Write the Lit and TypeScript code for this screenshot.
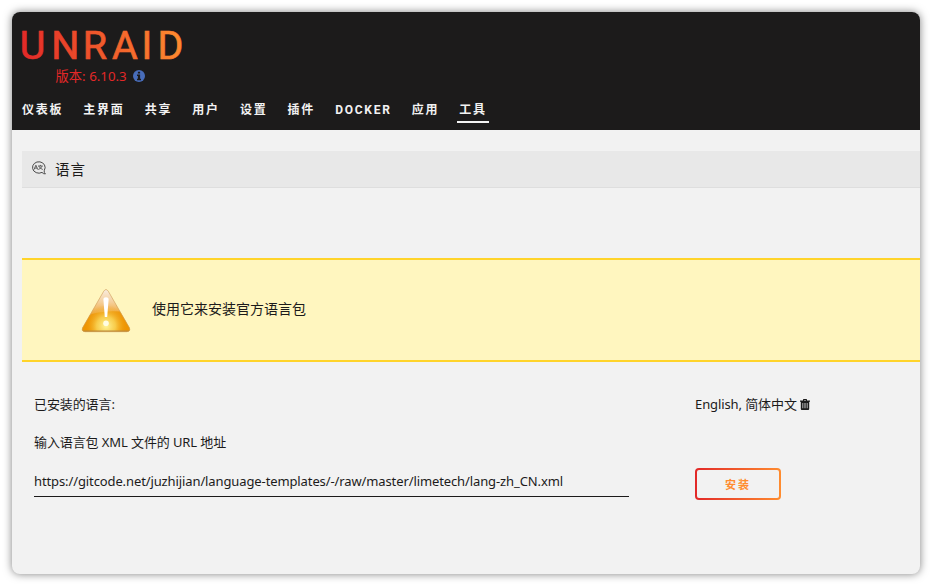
import { html, css, LitElement } from 'lit';
import { customElement, property } from 'lit/decorators.js';

const infoIcon = html`
    <svg class="icon" width="12" height="12" viewBox="0 0 12 12">
        <circle cx="6" cy="6" r="6" fill="#486dba"></circle>
        <path d="M4.9 1.7h2.2v1.8H4.9zM4 4.5h3.1v4.3H8v1.4H4V8.8h.9V5.9H4z" fill="#1c1b1b"></path>
    </svg>`;

const languageIcon = html`
    <svg width="16" height="14" viewBox="0 0 16 14" fill="none" stroke="#4a4a4a">
        <path d="M11 11.4A6.3 5.7 0 1 1 13.3 9.3Q12.6 11.6 14.4 12.9Q12.2 13 11 11.4" stroke-width="1"></path>
        <path d="M3 8.6L4.9 4.2L6.8 8.6M3.6 7.1h2.6M7 5h4.8M9.4 3.9V5M7.9 5.2Q9 7.7 11.8 8.5M11 5.2Q10 7.7 7.3 8.5" stroke-width=".85"></path>
    </svg>`;

const trashIcon = html`
    <svg class="icon" width="10" height="11" viewBox="0 0 10 11" fill="#1c1b1b">
        <path fill-rule="evenodd" d="M3 1.5V.7Q3 0 3.7 0h2.6Q7 0 7 .7v.8h3v1.2H9.2V10q0 1-1 1H1.8q-1 0-1-1V2.7H0V1.5zM4 .9v.6h2V.9zM2.5 4v5.2h.7V4zM4.6 4v5.2h.8V4zM6.8 4v5.2h.7V4z"></path>
    </svg>`;

const warningIcon = html`
    <svg width="50" height="46" viewBox="0 0 50 46">
        <defs>
            <linearGradient id="body" x1="0" y1="0" x2="0" y2="1">
                <stop offset="0" stop-color="#f8ece0"></stop>
                <stop offset=".3" stop-color="#f5cf9a"></stop>
                <stop offset=".58" stop-color="#f0a83a"></stop>
                <stop offset=".7" stop-color="#ef9c12"></stop>
                <stop offset="1" stop-color="#ee9809"></stop>
            </linearGradient>
            <radialGradient id="glow" gradientUnits="userSpaceOnUse" cx="25" cy="38" r="21">
                <stop offset="0" stop-color="#fff59a"></stop>
                <stop offset=".45" stop-color="#fad95c" stop-opacity=".8"></stop>
                <stop offset="1" stop-color="#ef9b0a" stop-opacity="0"></stop>
            </radialGradient>
            <clipPath id="shape">
                <path d="M22.8 3.1Q25 0 27.2 3.1L48.3 39.6Q50 43.5 45.8 43.7H4.2Q0 43.5 1.7 39.6Z"></path>
            </clipPath>
        </defs>
        <path d="M22.8 3.1Q25 0 27.2 3.1L48.3 39.6Q50 43.5 45.8 43.7H4.2Q0 43.5 1.7 39.6Z" fill="url(#body)"></path>
        <g clip-path="url(#shape)">
            <path d="M0 30Q22 20 50 25V46H0Z" fill="#ee9400" opacity=".8"></path>
            <rect y="18" width="50" height="28" fill="url(#glow)"></rect>
            <path d="M1 43.3H49" stroke="#b58b43" stroke-width="1.6"></path>
        </g>
        <path d="M22.8 3.1Q25 0 27.2 3.1L48.3 39.6Q50 43.5 45.8 43.7H4.2Q0 43.5 1.7 39.6Z" fill="none" stroke="#cf9f58" stroke-width=".8" opacity=".8"></path>
        <path d="M22.4 11.5Q22.4 9.2 25 9.2Q27.6 9.2 27.6 11.5L26.2 29H23.8Z" fill="#fff"></path>
        <circle cx="25" cy="35.3" r="2.8" fill="#fffde2"></circle>
    </svg>`;

@customElement('unraid-header')
export class UnraidHeader extends LitElement {

    @property()
    version: string = '';

    @property()
    active: string = '工具';

    items: string[] = ['仪表板', '主界面', '共享', '用户', '设置', '插件', 'DOCKER', '应用', '工具'];

    static styles = css`
    :host {
        display: block;
        box-sizing: border-box;
        height: 118px;
        padding: 8px 8px 0;
        background-color: #1c1b1b;
    }

    svg {
        display: block;
    }

    .logo {
        overflow: visible;
        font-family: Roboto, sans-serif;
        font-size: 39.4px;
        font-weight: 400;
    }

    .version {
        display: flex;
        align-items: center;
        gap: 6px;
        height: 20px;
        margin-top: -5px;
        padding-left: 35.5px;
        color: #e22828;
        font-size: 13.3px;
    }

    .icon {
        margin-top: 2px;
    }

    .menu {
        display: flex;
        gap: 16.1px;
        margin-top: 12px;
    }

    .item {
        box-sizing: border-box;
        height: 26px;
        padding: 0 2px;
        border-bottom: 2px solid transparent;
        color: #f2f2f2;
        font-family: Roboto, "Noto Sans CJK SC", sans-serif;
        font-size: 12px;
        font-weight: 700;
        line-height: 26px;
        letter-spacing: 1.75px;
        white-space: nowrap;
    }

    .active {
        border-bottom-color: #f2f2f2;
    }
  `;

    render() {
        return html`
            <svg class="logo" width="170" height="50" viewBox="0 0 170 50">
                <defs>
                    <linearGradient id="brand" gradientUnits="userSpaceOnUse" x1="2" y1="39" x2="162" y2="11">
                        <stop offset="0" stop-color="#e22828"></stop>
                        <stop offset="1" stop-color="#ff8c2f"></stop>
                    </linearGradient>
                </defs>
                <text x="-.3 31.2 62.8 92 121.6 137.6" y="39" fill="url(#brand)" stroke="url(#brand)" stroke-width=".7">UNRAID</text>
            </svg>
            <div class="version"><span>版本: ${this.version}</span>${infoIcon}</div>
            <nav class="menu">
                ${this.items.map(item => html`<a class="item ${item === this.active ? 'active' : ''}">${item}</a>`)}
            </nav>
        `;
    }
}

@customElement('language-form')
export class LanguageForm extends LitElement {

    @property()
    url: string = 'https://gitcode.net/juzhijian/language-templates/-/raw/master/limetech/lang-zh_CN.xml';

    static styles = css`
    :host {
        display: block;
        padding: 22px 0 0 12px;
        letter-spacing: -.1px;
    }

    .row {
        display: grid;
        grid-template-columns: 595px 1fr;
        column-gap: 66px;
        align-items: center;
        height: 38px;
    }

    .current {
        display: flex;
        align-items: center;
        gap: 3px;
    }

    .icon {
        margin-top: 2px;
    }

    .entry {
        align-items: start;
        height: 46px;
        padding-top: 8px;
    }

    .url {
        box-sizing: border-box;
        height: 29px;
        border: none;
        border-bottom: 1px solid #1c1b1b;
        border-radius: 0;
        outline: none;
        padding: 0 0 3px;
        background: transparent;
        color: #1c1b1b;
        font: inherit;
        letter-spacing: -.11px;
    }

    .install {
        box-sizing: border-box;
        width: 86px;
        height: 32px;
        border: 2px solid transparent;
        border-radius: 4px;
        padding: 0;
        background: linear-gradient(#f2f2f2, #f2f2f2) padding-box, linear-gradient(90deg, #e22828, #ff8c2f) border-box;
        color: #ff8c2f;
        font: inherit;
        font-size: 11px;
        font-weight: 700;
        letter-spacing: 2px;
    }
  `;

    render() {
        return html`
            <div class="row">
                <span>已安装的语言:</span>
                <span class="current"><span>English, 简体中文</span>${trashIcon}</span>
            </div>
            <div class="row"><span>输入语言包 XML 文件的 URL 地址</span></div>
            <div class="row entry">
                <input class="url" type="text" .value="${this.url}">
                <button class="install">安装</button>
            </div>
        `;
    }
}

@customElement('app-root')
export class AppRoot extends LitElement {

    static styles = css`
    :host {
        display: block;
        box-sizing: border-box;
        height: 586px;
        padding: 12px;
        background-color: #fff;
        color: #1c1b1b;
        font-family: "Noto Sans", "Noto Sans CJK SC", sans-serif;
        font-size: 13px;
    }

    svg {
        display: block;
    }

    .window {
        height: 562px;
        border-radius: 8px;
        overflow: hidden;
        background-color: #f2f2f2;
        box-shadow: 0 0 8px rgba(0, 0, 0, .5);
    }

    .content {
        padding: 21px 0 0 10px;
    }

    .title {
        display: flex;
        align-items: center;
        gap: 8px;
        box-sizing: border-box;
        height: 37px;
        padding: 0 0 2px 9px;
        border-bottom: 1px solid #dedede;
        background-color: #e8e8e8;
        font-size: 14.5px;
        letter-spacing: 1px;
    }

    .notice {
        display: flex;
        align-items: center;
        gap: 21px;
        box-sizing: border-box;
        height: 104px;
        margin-top: 70px;
        padding: 1px 0 0 59px;
        border-top: 2px solid #ffd42a;
        border-bottom: 2px solid #ffd42a;
        background-color: #fff6bf;
        font-size: 14px;
    }

    .message {
        padding-bottom: 6px;
    }
  `;

    render() {
        return html`
            <div class="window">
                <unraid-header version="6.10.3"></unraid-header>
                <main class="content">
                    <div class="title">${languageIcon}<span>语言</span></div>
                    <div class="notice">${warningIcon}<span class="message">使用它来安装官方语言包</span></div>
                    <language-form></language-form>
                </main>
            </div>
        `;
    }
}

declare global {
    interface HTMLElementTagNameMap {
        "app-root": AppRoot;
        "unraid-header": UnraidHeader;
        "language-form": LanguageForm;
    }
}
